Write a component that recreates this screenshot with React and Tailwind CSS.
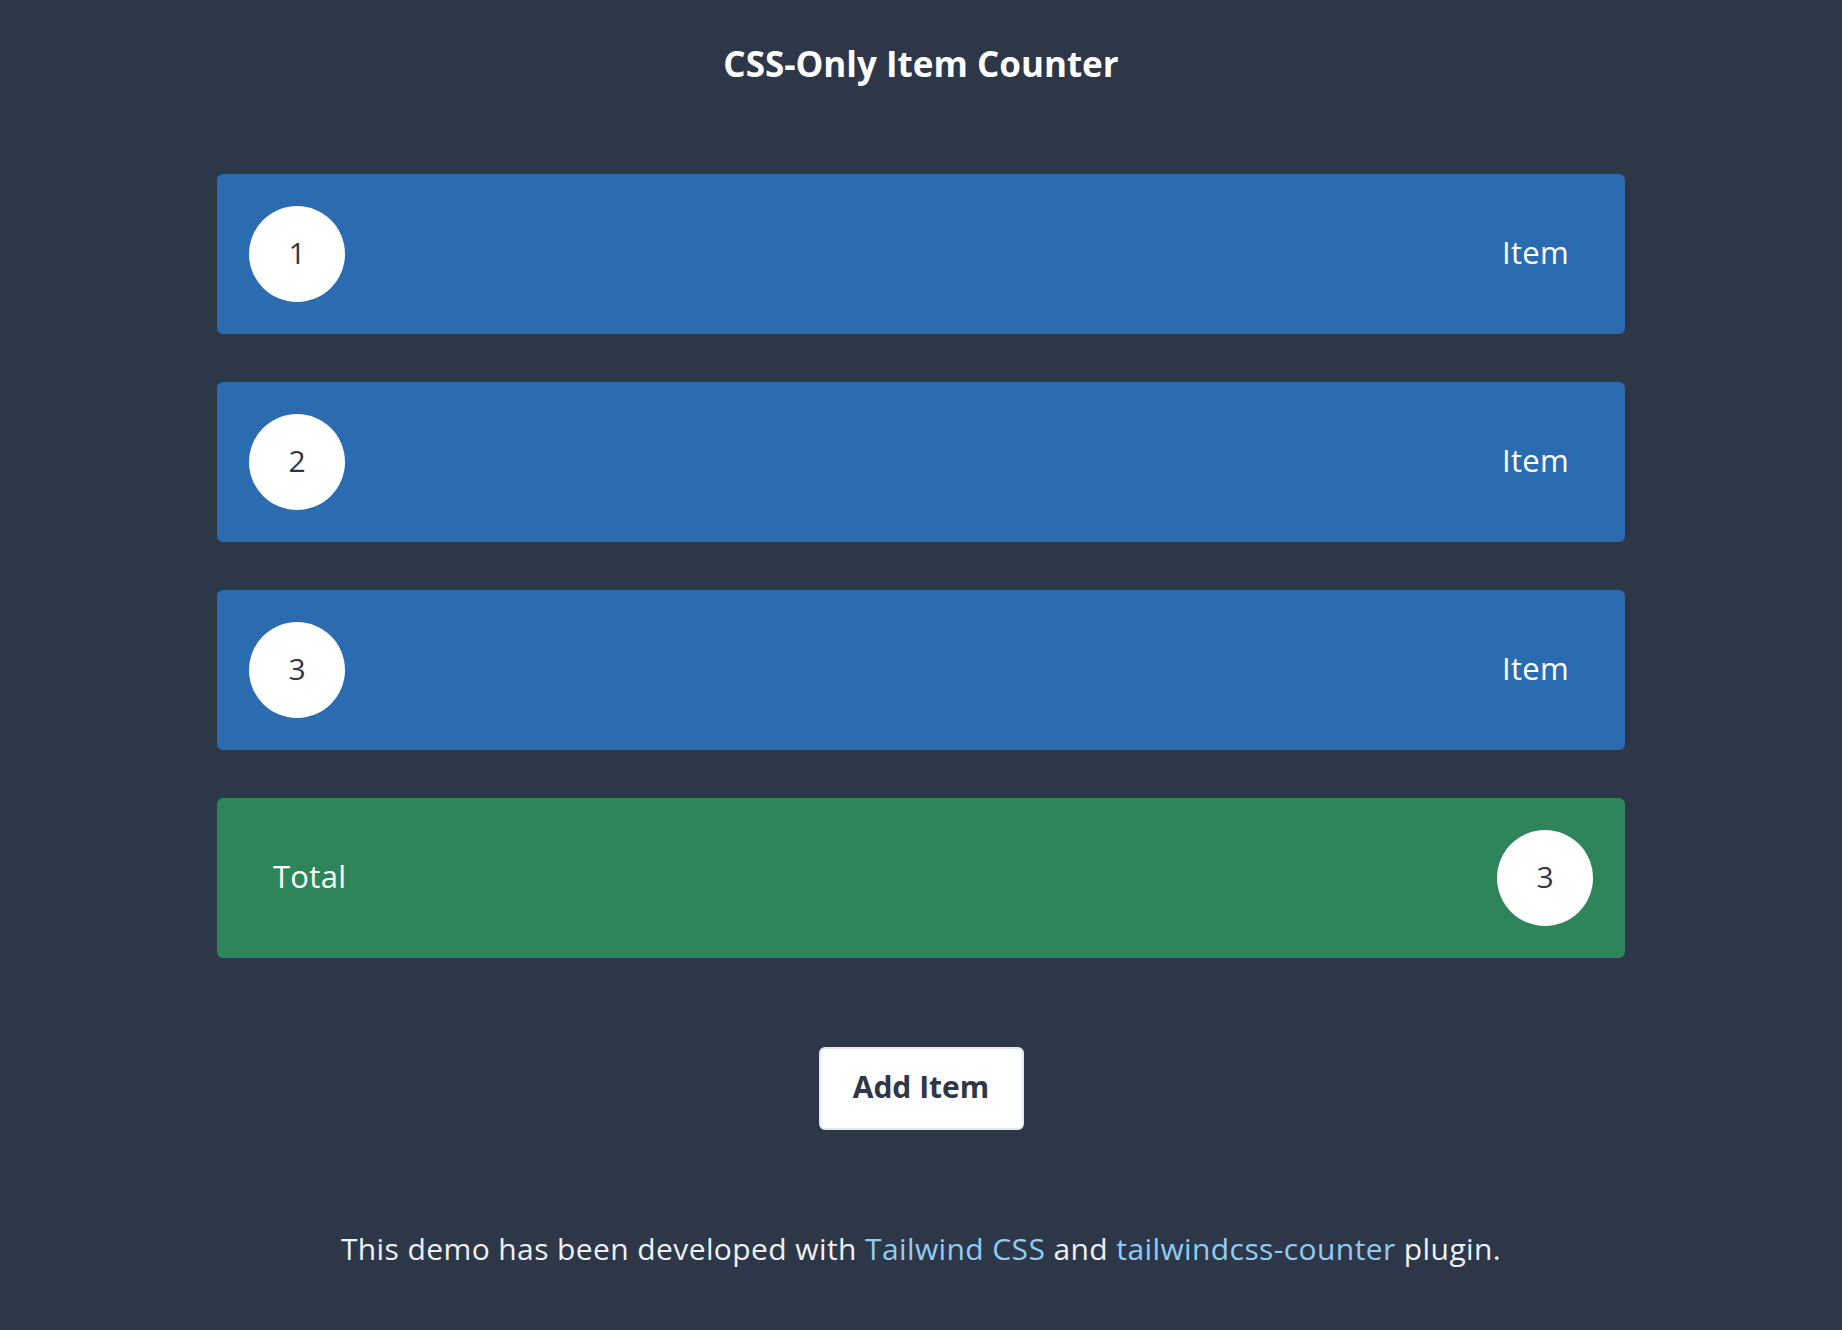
import React from "react";

const items = [1, 2, 3];

const Badge = ({ children }) => (
  <div className="flex h-24 w-24 shrink-0 items-center justify-center rounded-full bg-white pb-1 text-[30px] text-[#2d3748]">
    {children}
  </div>
);

const App = () => {
  return (
    <div
      className="min-h-screen bg-[#2d3748] pt-[44px] pb-16 text-white"
      style={{ fontFamily: '"Open Sans", "Noto Sans", sans-serif' }}
    >
      <h1 className="text-center text-[35px] leading-10 font-bold">CSS-Only Item Counter</h1>

      <div className="mx-auto mt-[90px] flex max-w-[1408px] flex-col gap-12">
        {items.map((n) => (
          <div key={n} className="flex items-center justify-between rounded-md bg-[#2b6cb0] p-8">
            <Badge>{n}</Badge>
            <span className="mx-6 pb-1 text-[31px] tracking-[0.3px]">Item</span>
          </div>
        ))}
        <div className="flex items-center justify-between rounded-md bg-[#2f855a] p-8">
          <span className="mx-6 pb-1 text-[31px] tracking-[0.3px]">Total</span>
          <Badge>{items.length}</Badge>
        </div>
      </div>

      <div className="mt-[89px] flex justify-center">
        <button className="h-[83px] w-[205px] rounded-md border-2 border-[#e2e8f0] bg-white pb-1 text-[30px] font-bold text-[#2d3748]">
          Add Item
        </button>
      </div>

      <p className="mt-[96px] text-center text-[30px] tracking-[0.4px] text-[#edf2f7]">
        This demo has been developed with{" "}
        <a href="#" className="text-[#90cdf4]">Tailwind CSS</a> and{" "}
        <a href="#" className="text-[#90cdf4]">tailwindcss-counter</a> plugin.
      </p>
    </div>
  );
};

export default App;
